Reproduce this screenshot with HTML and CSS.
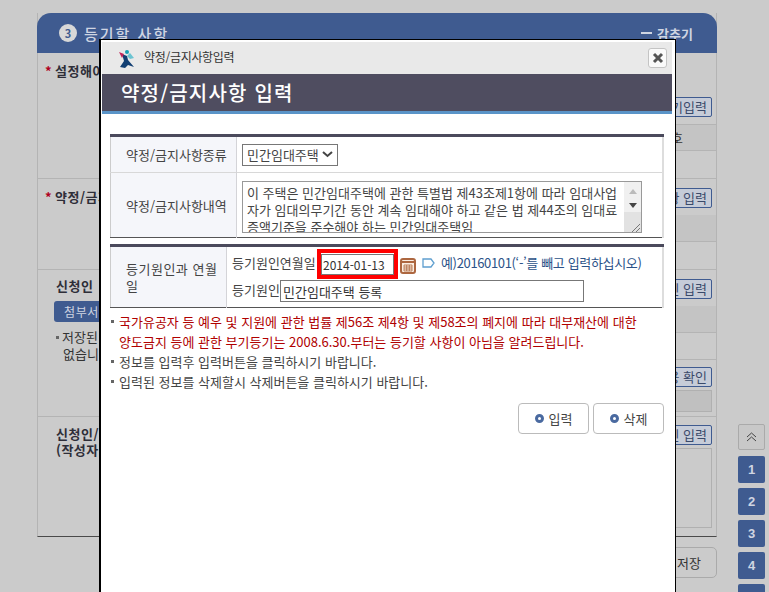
FILE: index.html
```html
<!DOCTYPE html>
<html lang="ko">
<head>
    <meta charset="UTF-8">
    <title>약정/금지사항입력</title>
    <link rel="stylesheet" href="styles.css">
</head>
<body>
    <div class="page">
        <div class="panel">
            <div class="panel-head">
                <h2><span class="step">3</span>등기할 사항</h2>
                <a class="fold"><i></i>감추기</a>
            </div>

            <div class="section sec-a">
                <div class="side"><strong><em>*</em>설정해야 할 사항</strong></div>
                <div class="main">
                    <div class="tools"><button class="line-btn">등기입력</button></div>
                    <div class="cell cell-a">호</div>
                    <div class="cell cell-b"></div>
                </div>
            </div>

            <div class="section sec-b">
                <div class="side"><strong><em>*</em>약정/금지사항</strong></div>
                <div class="main">
                    <div class="tools"><button class="line-btn">사항 입력</button></div>
                    <div class="cell cell-c shade"></div>
                </div>
            </div>

            <div class="section sec-c">
                <div class="side">
                    <strong class="plain">신청인</strong>
                    <button class="dark-btn">첨부서면</button>
                    <p class="side-note">저장된 내용이<br>없습니다</p>
                </div>
                <div class="main">
                    <div class="tools"><button class="line-btn">신청인 입력</button></div>
                    <div class="cell cell-c shade"></div>
                    <div class="cell cell-c"></div>
                    <div class="tools tools-b"><button class="line-btn">내용 확인</button></div>
                    <div class="gray-box box-s"></div>
                </div>
            </div>

            <div class="section sec-d">
                <div class="side"><strong class="plain">신청인/대리인<br>(작성자)</strong></div>
                <div class="main">
                    <div class="tools tools-c"><button class="line-btn">대리인 입력</button></div>
                    <div class="gray-box box-l"></div>
                </div>
            </div>
        </div>
        <div class="save-row"><button class="save-btn">저장</button></div>
    </div>

    <div class="quick">
        <button class="up">
            <svg width="11" height="10" viewBox="0 0 11 10"><path d="M1 5l4.5-4L10 5M1 9l4.5-4L10 9" fill="none" stroke="#444" stroke-width="1"/></svg>
        </button>
        <button>1</button>
        <button>2</button>
        <button>3</button>
        <button>4</button>
        <button>5</button>
    </div>

    <div class="modal">
        <div class="modal-top">
            <svg class="logo" width="17" height="19" viewBox="0 0 17 19">
                <path d="M4 5l5 2 1 4 6 7-6-2-3 3-5-1 4-6z" fill="#123f73"/>
                <path d="M1 3l5 2-2 4z" fill="#c0265a"/>
                <circle cx="9" cy="3" r="2" fill="#17a1b5"/>
                <path d="M9 7l3-3 4 5-4 1z" fill="#6cc4d2"/>
            </svg>
            <span class="modal-name">약정/금지사항입력</span>
            <button class="close">
                <svg width="12" height="12" viewBox="0 0 12 12"><path d="M2 2l8 8M10 2l-8 8" stroke="#555" stroke-width="3"/></svg>
            </button>
        </div>
        <h1 class="modal-title">약정/금지사항 입력</h1>

        <div class="modal-body">
            <table class="form form-a">
                <tr class="row-kind">
                    <th>약정/금지사항종류</th>
                    <td>
                        <div class="fake-select">민간임대주택
                            <svg width="11" height="7" viewBox="0 0 11 7"><path d="M1 1l4.5 4L10 1" fill="none" stroke="#444" stroke-width="2"/></svg>
                        </div>
                    </td>
                </tr>
                <tr class="row-memo">
                    <th>약정/금지사항내역</th>
                    <td>
                        <div class="memo">
                            <textarea wrap="off" readonly>이 주택은 민간임대주택에 관한 특별법 제43조제1항에 따라 임대사업
자가 임대의무기간 동안 계속 임대해야 하고 같은 법 제44조의 임대료
증액기준을 준수해야 하는 민간임대주택임</textarea>
                            <div class="scroll">
                                <span class="arrow up-off"></span>
                                <span class="arrow down-on"></span>
                                <span class="grip">
                                    <svg width="10" height="9" viewBox="0 0 10 9"><path d="M1 9l8-8M5 9l4-4" stroke="#777" stroke-width="1" fill="none"/></svg>
                                </span>
                            </div>
                        </div>
                    </td>
                </tr>
            </table>

            <table class="form form-b">
                <tr>
                    <th>등기원인과 연월일</th>
                    <td>
                        <div class="date-line">
                            <label>등기원인연월일</label>
                            <span class="marked"><input type="text" value="2014-01-13"></span>
                            <svg class="cal" width="16" height="17" viewBox="0 0 16 17">
                                <rect x="1" y="2" width="14" height="14" rx="2" fill="#fbeee2" stroke="#ad6740" stroke-width="2"/>
                                <path d="M1 5h14" stroke="#ad6740" stroke-width="2"/>
                                <path d="M4 8h8v6H4zM4 10h8M4 12h8M6.7 8v6M9.3 8v6" fill="none" stroke="#ad6740" stroke-width=".8"/>
                            </svg>
                            <svg class="tag" width="13" height="10" viewBox="0 0 13 10"><path d="M1 1h8l3 4-3 4H1z" fill="none" stroke="#5f9fcf" stroke-width="1.3"/></svg>
                            <span class="hint">예)20160101(‘-’를 빼고 입력하십시오)</span>
                        </div>
                        <div class="cause-line">
                            <label>등기원인</label>
                            <input type="text" value="민간임대주택 등록">
                        </div>
                    </td>
                </tr>
            </table>

            <ul class="notes">
                <li class="warn">국가유공자 등 예우 및 지원에 관한 법률 제56조 제4항 및 제58조의 폐지에 따라 대부재산에 대한 양도금지 등에 관한 부기등기는 2008.6.30.부터는 등기할 사항이 아님을 알려드립니다.</li>
                <li>정보를 입력후 입력버튼을 클릭하시기 바랍니다.</li>
                <li>입력된 정보를 삭제할시 삭제버튼을 클릭하시기 바랍니다.</li>
            </ul>

            <div class="actions">
                <button class="act"><i></i>입력</button>
                <button class="act"><i></i>삭제</button>
            </div>
        </div>
    </div>
</body>
</html>
```

FILE: styles.css
```css
/* 기본 */
html, body {
    height: 592px;
    overflow: hidden;
}

body {
    margin: 0;
    background: #cbcbcb;
    color: #333;
    font-family: "Noto Sans CJK KR", "Noto Sans", sans-serif;
    font-size: 13px;
}

button, input, textarea {
    font-family: inherit;
}

/* 뒤쪽 화면 */
.page {
    width: 680px;
    padding: 13px 0 0 37px;
}

.panel {
    border-bottom: 1px solid #4a4a4a;
    border-right: 1px solid #b4b4b4;
    border-left: 1px solid #b4b4b4;
    box-sizing: border-box;
}

.panel-head {
    display: flex;
    justify-content: space-between;
    align-items: center;
    height: 40px;
    margin: 0 -1px;
    padding: 0 24px 0 22px;
    background: #3f5b90;
    border-radius: 14px 14px 0 0;
    color: #cfd5e2;
}

.panel-head h2 {
    display: flex;
    align-items: center;
    margin: 0;
    font-size: 15px;
    font-weight: 500;
    letter-spacing: 2px;
}

.step {
    width: 18px;
    height: 18px;
    margin-right: 7px;
    border-radius: 50%;
    background: #d8d8d8;
    color: #3f5b90;
    font-size: 11px;
    font-weight: 700;
    letter-spacing: 0;
    line-height: 18px;
    text-align: center;
}

.fold {
    display: flex;
    align-items: center;
    font-size: 13px;
    font-weight: 700;
}

.fold i {
    width: 11px;
    height: 2px;
    margin-right: 5px;
    background: #cfd5e2;
}

.section {
    display: flex;
    justify-content: space-between;
    box-sizing: border-box;
    border-bottom: 1px solid #b4b4b4;
}

.sec-a { height: 126px; }
.sec-b { height: 91px; }
.sec-c { height: 147px; }
.sec-d { height: 119px; border-bottom: 0; }

.side {
    width: 230px;
    padding: 8px 0 0 7px;
}

.sec-d .side {
    padding-top: 9px;
}

.side strong {
    color: #2e2e38;
    font-size: 13px;
    line-height: 16px;
    letter-spacing: 0.5px;
}

.side em {
    margin-right: 3px;
    color: #b00020;
    font-style: normal;
}

.side .plain {
    display: block;
    margin-left: 11px;
}

.dark-btn {
    display: block;
    width: 90px;
    height: 21px;
    margin: 7px 0 0 9px;
    padding: 0 0 0 10px;
    border: 0;
    border-radius: 3px;
    background: #3f5b90;
    color: #cfd5e2;
    font-size: 12px;
    letter-spacing: 0.6px;
    text-align: left;
}

.side-note {
    margin: 6px 0 0 18px;
    font-size: 13px;
    line-height: 17px;
}

.side-note::before {
    content: "";
    display: inline-block;
    width: 3px;
    height: 3px;
    margin: 0 3px 3px -7px;
    background: #666;
}

.main {
    width: 400px;
}

.tools {
    display: flex;
    justify-content: flex-end;
    height: 20px;
    padding: 9px 4px 7px 0;
}

.sec-a .tools {
    padding-top: 44px;
    padding-bottom: 7px;
    border-bottom: 1px solid #b4b4b4;
}

.tools-b {
    padding-top: 7px;
    padding-bottom: 3px;
}

.tools-c {
    padding-top: 8px;
    padding-bottom: 3px;
}

.line-btn {
    height: 20px;
    padding: 0 4px;
    border: 1px solid #3f5b90;
    border-radius: 2px;
    background: #c6ccd8;
    color: #3a4a6a;
    font-size: 13px;
    line-height: 16px;
    white-space: nowrap;
}

.cell {
    box-sizing: border-box;
    border-bottom: 1px solid #b4b4b4;
    padding-left: 355px;
    line-height: 26px;
    white-space: nowrap;
}

.cell-a {
    height: 26px;
    background: #c4c4c4;
}

.cell-b {
    height: 28px;
    border-bottom: 0;
}

.cell-c {
    height: 27px;
}

.shade {
    background: #c4c4c4;
}

.gray-box {
    margin-right: 4px;
    border: 1px solid #b0b0b0;
    background: #c0c0c0;
}

.box-s {
    height: 20px;
}

.box-l {
    height: 78px;
    background: #cbcbcb;
}

.save-row {
    display: flex;
    justify-content: flex-end;
    margin-top: 10px;
}

.save-btn {
    width: 120px;
    height: 31px;
    padding: 0 15px 0 0;
    border: 1px solid #aaa;
    border-radius: 5px;
    background: #cbcbcb;
    color: #333;
    font-size: 13px;
    text-align: right;
}

/* 오른쪽 바로가기 */
.quick {
    position: absolute;
    top: 424px;
    left: 738px;
    display: flex;
    flex-direction: column;
    gap: 5px;
}

.quick button {
    width: 27px;
    height: 27px;
    padding: 0;
    border: 0;
    border-radius: 2px;
    background: #3f5b90;
    color: #cfd5e2;
    font-size: 13px;
    font-weight: 700;
    font-family: "Liberation Sans", sans-serif;
}

.quick .up {
    height: 26px;
    margin-bottom: 1px;
    border: 1px solid #aaa;
    background: #c8c8c8;
}

/* 팝업 */
.modal {
    position: absolute;
    top: 39px;
    left: 99px;
    box-sizing: border-box;
    width: 577px;
    height: 553px;
    padding: 2px 3px 0 1px;
    border: 1px solid #000;
    border-left-width: 2px;
    border-bottom: 0;
    background: #fff;
}

.modal-top {
    display: flex;
    align-items: center;
    height: 32px;
    padding: 0 5px 0 16px;
    background: #e9e9e9;
}

.modal-name {
    margin: 0 0 3px 9px;
    color: #333;
    font-size: 12px;
    letter-spacing: -0.3px;
}

.close {
    display: flex;
    align-items: center;
    justify-content: center;
    width: 19px;
    height: 20px;
    margin-left: auto;
    padding: 0;
    border: 1px solid #c4c4c4;
    border-radius: 3px;
    background: #fafafa;
}

.modal-title {
    height: 37px;
    margin: 0;
    padding-left: 19px;
    border-bottom: 3px solid #5a94c8;
    background: #4f4d60;
    color: #fff;
    font-size: 20px;
    font-weight: 500;
    letter-spacing: 1.2px;
    line-height: 37px;
}

.modal-body {
    padding: 20px 8px 0;
}

.form {
    width: 100%;
    border-collapse: collapse;
    border-top: 3px solid #4b4a5c;
    border-bottom: 1px solid #555;
    border-left: 1px solid #ccc;
    border-right: 2px solid #ddd;
}

.form th {
    padding: 0 0 0 15px;
    background: #f5f6fa;
    border-right: 1px solid #d4d4d8;
    color: #444;
    font-size: 13px;
    font-weight: 400;
    text-align: left;
}

.form-a th {
    width: 110px;
}

.form-b th {
    width: 95px;
    padding-right: 5px;
    line-height: 17px;
    letter-spacing: 0.5px;
}

.form td {
    padding: 0 0 0 5px;
}

.row-kind {
    height: 37px;
    border-bottom: 1px solid #d8d8d8;
}

.row-memo {
    height: 65px;
}

.fake-select {
    display: flex;
    align-items: center;
    justify-content: space-between;
    box-sizing: border-box;
    width: 96px;
    height: 22px;
    padding: 0 4px;
    border: 1px solid #777;
    color: #444;
    font-size: 13px;
}

.memo {
    display: flex;
    box-sizing: border-box;
    width: 400px;
    height: 52px;
    margin-top: 3px;
    border: 1px solid #999;
    overflow: hidden;
}

.memo textarea {
    flex: 1;
    min-width: 0;
    height: 56px;
    margin: 0;
    padding: 2px 4px;
    border: 0;
    outline: 0;
    resize: none;
    overflow: hidden;
    color: #444;
    font-size: 13px;
    line-height: 17px;
}

.scroll {
    display: flex;
    flex-direction: column;
    align-items: center;
    width: 17px;
    background: #f0f0f0;
}

.arrow {
    width: 0;
    height: 0;
    margin-top: 7px;
    border-left: 4px solid transparent;
    border-right: 4px solid transparent;
}

.up-off {
    border-bottom: 5px solid #bbb;
}

.down-on {
    margin-top: 9px;
    border-top: 5px solid #444;
}

.grip {
    display: flex;
    align-items: flex-end;
    justify-content: flex-end;
    flex: 1;
    width: 17px;
    margin-top: 4px;
    background: #e2e2e2;
}

.form-b {
    margin-top: 6px;
}

.form-b td {
    padding: 2px 0 5px 5px;
}

.date-line, .cause-line {
    display: flex;
    align-items: center;
    color: #444;
    white-space: nowrap;
}

.date-line {
    height: 30px;
    margin-bottom: 1px;
}

.date-line label {
    width: 85px;
    margin-bottom: 3px;
}

.marked {
    display: block;
    box-sizing: border-box;
    width: 81px;
    height: 30px;
    padding-top: 1px;
    border: 4px solid #ff0000;
}

.marked input {
    display: block;
    box-sizing: border-box;
    width: 100%;
    height: 21px;
    padding: 0 1px;
    border: 1px solid #777;
    color: #333;
    font-size: 12px;
}

.cal {
    margin: 3px 0 0 2px;
}

.tag {
    margin: 0 0 2px 6px;
}

.hint {
    margin: 0 0 3px 6px;
    color: #2c5288;
    letter-spacing: -0.35px;
}

.cause-line {
    height: 22px;
}

.cause-line label {
    width: 48px;
    margin-bottom: 3px;
}

.cause-line input {
    box-sizing: border-box;
    width: 304px;
    height: 22px;
    padding: 0 2px;
    border: 1px solid #777;
    color: #333;
    font-size: 13px;
}

.notes {
    margin: 4px 0 0;
    padding: 0 20px 0 9px;
    list-style: none;
    color: #444;
    font-size: 13px;
    line-height: 20px;
}

.notes li {
    position: relative;
}

.notes li::before {
    content: "";
    position: absolute;
    top: 8px;
    left: -8px;
    width: 3px;
    height: 3px;
    background: #666;
}

.warn {
    color: #b00000;
}

.actions {
    display: flex;
    justify-content: flex-end;
    gap: 4px;
    margin-top: 11px;
}

.act {
    display: flex;
    align-items: center;
    justify-content: center;
    width: 71px;
    height: 31px;
    padding: 0;
    border: 1px solid #bbb;
    border-radius: 4px;
    background: #fff;
    color: #444;
    font-size: 13px;
}

.act i {
    box-sizing: border-box;
    width: 9px;
    height: 9px;
    margin-right: 5px;
    border: 3px solid #4a6aa0;
    border-radius: 50%;
}
```
